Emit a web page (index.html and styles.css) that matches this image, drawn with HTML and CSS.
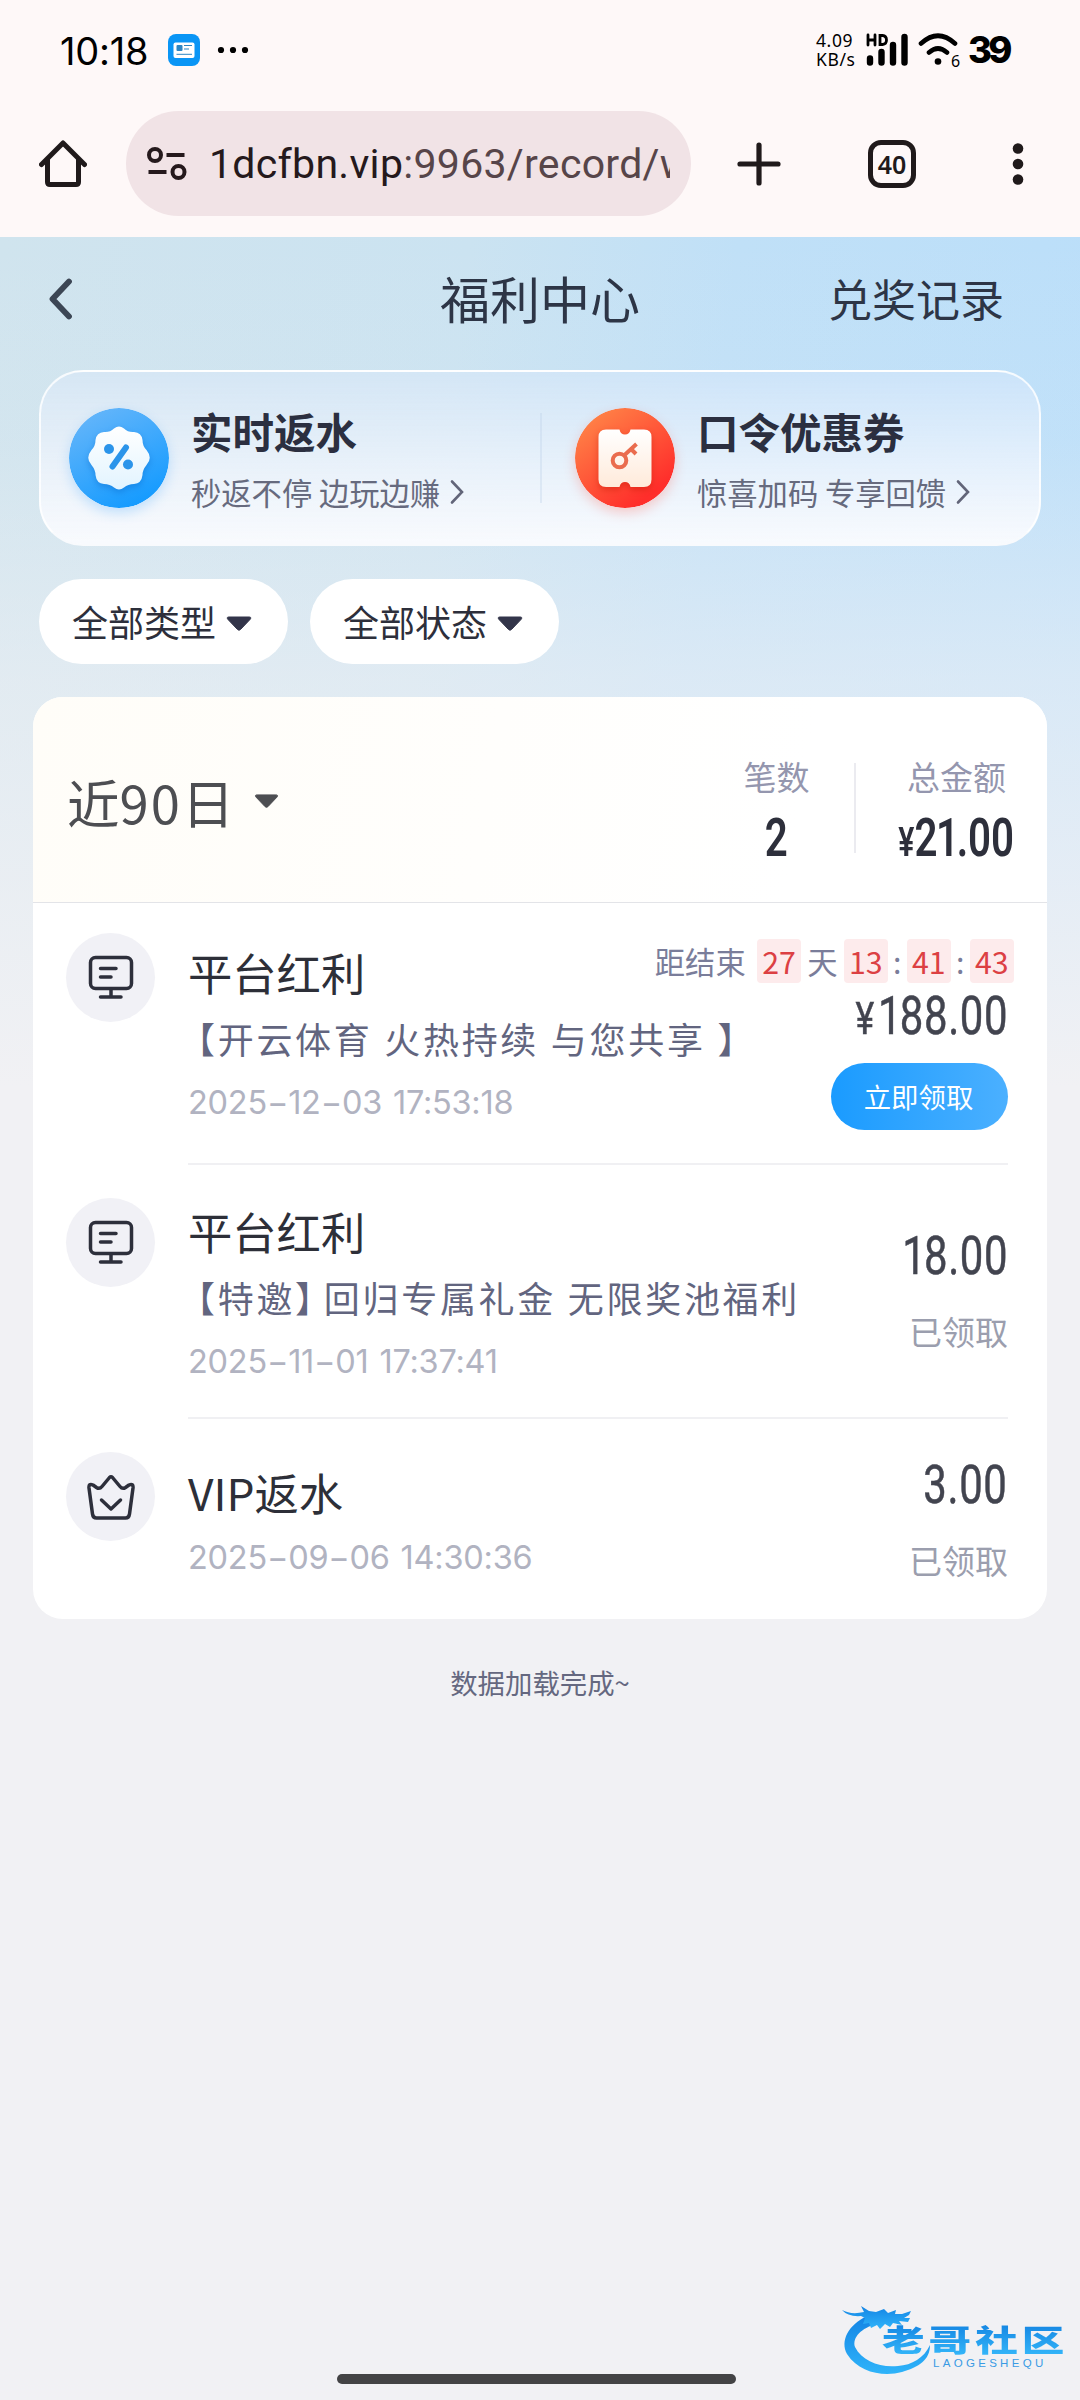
FILE: index.html
```html
<!DOCTYPE html>
<html lang="zh-CN">
<head>
<meta charset="utf-8">
<title>福利中心</title>
<link rel="stylesheet" href="styles.css">
</head>
<body>
<header class="statusbar">
  <span class="clock">10:18</span>
  <svg class="app-badge" width="32" height="32" viewBox="0 0 32 32"><rect width="32" height="32" rx="8" fill="#0a95f5"/><rect x="5.500" y="8.500" width="21" height="15.500" rx="2" fill="#fff"/><rect x="8.500" y="11" width="6" height="6" rx="1" fill="#2d86c4"/><path d="M16 11.500h8M16 15h5M8.500 20.300h15.500" stroke="#2d86c4" stroke-width="1"/></svg>
  <svg class="more" width="32" height="8" viewBox="0 0 32 8"><circle cx="4" cy="4" r="3.100"/><circle cx="16" cy="4" r="3.100"/><circle cx="28" cy="4" r="3.100"/></svg>
  <span class="speed"><span>4.09</span><span>KB/s</span></span>
  <svg class="signal" width="44" height="34" viewBox="0 0 44 34"><path d="M2 2v10M9 2v10M2 7h7M14 2.500v9h2.500q4-.4 4-4.500t-4-4.500z" fill="none" stroke="#000" stroke-width="2.800" stroke-linecap="round"/><path d="M4 25.500v4M15.500 19v10.500M27 12v17.500M38.500 4v25.500" stroke="#000" stroke-width="6.400" stroke-linecap="round"/></svg>
  <svg class="wifi" width="42" height="34" viewBox="0 0 42 34"><path d="M3 10.500Q20 -5 37 10.500M11 19.500Q20 11.500 29 19.500" fill="none" stroke="#000" stroke-width="4.600" stroke-linecap="round"/><circle cx="20" cy="28.500" r="3.300"/></svg>
  <span class="wifi-gen">6</span>
  <span class="battery">39</span>
</header>

<nav class="browser">
  <svg class="home" width="48" height="48" viewBox="0 0 48 48"><path d="M2.500 24.500L24 3L45.500 24.500M8.500 19v23q0 2.500 2.500 2.500h26q2.500 0 2.500-2.500V19" fill="none" stroke="#201a1b" stroke-width="5" stroke-linecap="round" stroke-linejoin="round"/></svg>
  <div class="urlbar">
    <svg width="40" height="36" viewBox="0 0 40 36"><g fill="none" stroke="#25191c" stroke-width="4"><circle cx="8" cy="9" r="6"/><circle cx="31.500" cy="26" r="6"/><path d="M19.500 9h18M1.500 26h18"/></g></svg>
    <div class="url"><b>1dcfbn.vip</b>:9963/record/w</div>
  </div>
  <svg class="plus" width="44" height="44" viewBox="0 0 44 44"><path d="M22 3v38M3 22h38" stroke="#201a1b" stroke-width="5.200" stroke-linecap="round"/></svg>
  <div class="tabs">40</div>
  <svg class="kebab" width="12" height="44" viewBox="0 0 12 44"><g fill="#201a1b"><circle cx="6" cy="6.500" r="5.300"/><circle cx="6" cy="22" r="5.300"/><circle cx="6" cy="37.500" r="5.300"/></g></svg>
</nav>

<main class="page">
  <div class="titlebar">
    <svg width="26" height="42" viewBox="0 0 26 42"><path d="M22 3.500L5.500 21l16.500 17.500" fill="none" stroke="#3c4654" stroke-width="5.800" stroke-linecap="round" stroke-linejoin="round"/></svg>
    <h1>福利中心</h1>
    <a>兑奖记录</a>
  </div>

  <section class="promo">
    <div class="promo-item">
      <svg class="promo-icon blue" width="100" height="100" viewBox="0 0 100 100">
        <defs><linearGradient id="gb" x1="0.200" y1="0" x2="0.700" y2="1"><stop offset="0" stop-color="#66b6fa"/><stop offset="1" stop-color="#129aff"/></linearGradient><linearGradient id="gw" x1="0" y1="0" x2="0" y2="1"><stop offset="0" stop-color="#fff"/><stop offset="1" stop-color="#e2f4ff"/></linearGradient></defs>
        <circle cx="50" cy="50" r="50" fill="url(#gb)"/>
        <path class="badge" d="M45 20.500Q50 16.500 55 20.500Q59 24.500 65 24Q72.500 24.500 73.500 32Q73.500 38 77.500 42Q84 50 77.500 57Q73.500 62 73.500 67Q72.500 75.500 65 76Q59 76 55 79.500Q50 83.500 45 79.500Q41 76 35 76Q27.500 75.500 26.500 67Q26.500 62 22.500 57Q16 50 22.500 42Q26.500 38 26.500 32Q27.500 24.500 35 24Q41 24.500 45 20.500Z" fill="url(#gw)"/>
        <g fill="#2b94ea"><circle cx="40" cy="41" r="5"/><circle cx="59" cy="56.500" r="5"/><path d="M57 39.500L43.500 58.500" stroke="#2b94ea" stroke-width="6" stroke-linecap="round"/></g>
      </svg>
      <div class="promo-text"><h2>实时返水</h2><p>秒返不停 边玩边赚<svg width="16" height="26" viewBox="0 0 16 26"><path d="M3 2.500L13 13L3 23.500" fill="none" stroke="#626579" stroke-width="2.600" stroke-linecap="round"/></svg></p></div>
    </div>
    <div class="promo-item second">
      <svg class="promo-icon red" width="100" height="100" viewBox="0 0 100 100">
        <defs><linearGradient id="gr" x1="0.100" y1="0.100" x2="0.700" y2="0.900"><stop offset="0" stop-color="#ff8347"/><stop offset="1" stop-color="#ff2e2b"/></linearGradient><linearGradient id="gc" x1="0" y1="0" x2="0" y2="1"><stop offset="0" stop-color="#fff"/><stop offset="1" stop-color="#ffeada"/></linearGradient></defs>
        <circle cx="50" cy="50" r="50" fill="url(#gr)"/>
        <path class="ticket" d="M31 21.500h13.500q1 5 5.500 5t5.500-5H69q7.500 0 7.500 7.500v42.500q0 7.500-7.500 7.500H55.500q-1-5-5.500-5t-5.500 5H31q-7.500 0-7.500-7.500V29q0-7.500 7.500-7.500z" fill="url(#gc)"/>
        <g fill="none" stroke="#ea6c4e" stroke-width="4"><circle cx="44.500" cy="52.500" r="6.800"/><path d="M49 47.500L61.500 36M56 41l5 5"/></g>
      </svg>
      <div class="promo-text"><h2>口令优惠券</h2><p>惊喜加码 专享回馈<svg width="16" height="26" viewBox="0 0 16 26"><path d="M3 2.500L13 13L3 23.500" fill="none" stroke="#626579" stroke-width="2.600" stroke-linecap="round"/></svg></p></div>
    </div>
  </section>

  <div class="filters">
    <button>全部类型<svg width="28" height="17" viewBox="0 0 28 17"><path d="M4 2h20q3 0 1 2.500L15.500 14.500q-1.500 1.500-3 0L3 4.500Q1 2 4 2z" fill="#33354a" stroke="#33354a"/></svg></button>
    <button>全部状态<svg width="28" height="17" viewBox="0 0 28 17"><path d="M4 2h20q3 0 1 2.500L15.500 14.500q-1.500 1.500-3 0L3 4.500Q1 2 4 2z" fill="#33354a" stroke="#33354a"/></svg></button>
  </div>

  <section class="card">
    <div class="summary">
      <div class="range"><span>近<span class="days">90</span>日</span><svg width="27" height="16" viewBox="0 0 28 17"><path d="M4 2h20q3 0 1 2.500L15.500 14.500q-1.500 1.500-3 0L3 4.500Q1 2 4 2z" fill="#4d4e52" stroke="#4d4e52"/></svg></div>
      <div class="stat count"><label>笔数</label><strong class="num">2</strong></div>
      <div class="stat total"><label>总金额</label><strong class="num"><i>¥</i>2<span class="one">1</span>.00</strong></div>
    </div>

    <article class="row first">
      <div class="kind"><svg width="46" height="46" viewBox="0 0 46 46"><g fill="none" stroke="#2d2f3b" stroke-width="3.500" stroke-linecap="round"><rect x="2.500" y="2.500" width="41" height="31" rx="5"/><path d="M12.500 13.500h15.500M12.500 22h10.500M23 34v7.500M12.500 42h20.500"/></g></svg></div>
      <div class="info"><h3>平台红利</h3><p><span class="lead">【</span>开云体育 火热持续 与您共享 】</p><time>2025−12−03 17:53:18</time></div>
      <div class="side">
        <div class="countdown">距结束<b>27</b>天<b>13</b><em>:</em><b>41</b><em>:</em><b>43</b></div>
        <div class="amount"><span class="num"><i>¥</i><span class="one">1</span>88.00</span></div>
        <button class="claim">立即领取</button>
      </div>
    </article>

    <article class="row second-row">
      <div class="kind"><svg width="46" height="46" viewBox="0 0 46 46"><g fill="none" stroke="#2d2f3b" stroke-width="3.500" stroke-linecap="round"><rect x="2.500" y="2.500" width="41" height="31" rx="5"/><path d="M12.500 13.500h15.500M12.500 22h10.500M23 34v7.500M12.500 42h20.500"/></g></svg></div>
      <div class="info"><h3>平台红利</h3><p><span class="lead">【</span>特邀<span class="tail">】</span>回归专属礼金 无限奖池福利</p><time>2025−11−01 17:37:41</time></div>
      <div class="side"><div class="amount"><span class="num"><span class="one">1</span>8.00</span></div><span class="state">已领取</span></div>
    </article>

    <article class="row third-row">
      <div class="kind"><svg width="48" height="46" viewBox="0 0 48 46"><g fill="none" stroke="#2d2f3b" stroke-width="3.500" stroke-linecap="round" stroke-linejoin="round"><path d="M22.500 3.500q1.500-1.500 3 0L33 12.500q2.500 3 5.500 1l3.500-2.500q4.500-2 4 3L42.500 40q-.5 4-4 4h-29q-3.500 0-4-4L2 14q-.5-5 4-3l3.500 2.500q3 2 5.500-1z"/><path d="M14.500 26l9.500 9l9.500-9"/></g></svg></div>
      <div class="info"><h3>VIP返水</h3><time>2025−09−06 14:30:36</time></div>
      <div class="side"><div class="amount"><span class="num">3.00</span></div><span class="state">已领取</span></div>
    </article>
  </section>
  <p class="done">数据加载完成~</p>
</main>

<div class="watermark">
  <svg width="96" height="74" viewBox="0 0 96 74"><defs><linearGradient id="dg" x1="0" y1="0" x2="0" y2="1"><stop offset="0" stop-color="#1484e4"/><stop offset="1" stop-color="#2fb4fa"/></linearGradient></defs><g fill="url(#dg)"><path d="M27 13C8 22 0 38 7 51C19 70 44 74 62 69C79 64 90 57 90 42C84 55 72 62 58 63C40 65 22 58 15 44C12 34 22 25 36 21Z"/><path d="M2 7q9 5 22 2l-3-6 8 5 7 1 8-3 4 4 8-3-1 4 7 0 9-3-2 4-5 3 6 0-2 4-9-1 3 4-9-2-3 4-5-3-5 5-3-4-6 3-2-5-6 1 2-6-4-2Q8 14 2 7z"/></g></svg>
  <div class="wm-text"><span class="wm-name">老哥社区</span><span class="wm-latin">LAOGESHEQU</span></div>
</div>
<div class="gesture"></div>
</body>
</html>
```
FILE: styles.css
```css
* { box-sizing: border-box; margin: 0; padding: 0; }
body {
  width: 1080px; height: 2400px; overflow: hidden; position: relative;
  display: flex; flex-direction: column;
  background: #f1f1f4; color: #2d2f3b;
  font-family: "Noto Sans CJK SC", sans-serif;
}
h1, h2, h3 { font-weight: 400; }
svg { display: block; flex: none; }
button { border: 0; font: inherit; color: inherit; }
i, em { font-style: normal; }

.statusbar {
  height: 100px; background: #fef8f8; color: #000;
  display: flex; align-items: center; padding-left: 60px; flex: none;
}
.clock { font: 400 38px/40px Inter, sans-serif; letter-spacing: -.2px; width: 108px; margin-top: 2px; }
.more { margin-left: 17px; }
.speed { display: flex; flex-direction: column; font: 400 17.500px/19px "Noto Sans", sans-serif; margin-left: 567px; width: 50px; letter-spacing: .6px; }
.signal { width: 44px; }
.wifi { margin-left: 8px; }
.wifi-gen { font: 400 16px/16px "Noto Sans", sans-serif; margin: 21px 0 0 -9px; width: 17px; }
.battery { font: 800 36.500px/40px Inter, sans-serif; letter-spacing: -3.800px; }

.browser { height: 137px; background: #fef8f8; display: flex; align-items: center; flex: none; padding: 0 0 10px 39px; }
.urlbar { width: 565px; height: 105px; margin-left: 39px; border-radius: 53px; background: #f1e3e6; display: flex; align-items: center; padding-left: 21px; }
.url { margin-left: 22px; width: 461px; overflow: hidden; white-space: nowrap; font: 400 41px/60px Roboto, sans-serif; color: #574549; letter-spacing: .3px; }
.url b { font-weight: 400; color: #25191c; }
.plus { margin-left: 46px; }
.tabs { width: 48px; height: 48px; margin-left: 87px; border: 5px solid #201a1b; border-radius: 13px; font: 600 25px/38px "Noto Sans", sans-serif; color: #201a1b; text-align: center; }
.kebab { margin-left: 96px; }

.page {
  height: 2163px; display: flex; flex-direction: column;
  background:
    linear-gradient(180deg, rgba(241,241,244,0) 0, rgba(241,241,244,.1) 200px, rgba(241,241,244,.55) 440px, #f1f1f4 850px),
    linear-gradient(97deg, #d0e4ee 0, #cbe3f1 35%, #c0e0f7 55%, #b8defb 100%);
}
.titlebar { height: 124px; display: flex; align-items: center; padding-left: 47px; }
.titlebar h1 { font-size: 50px; line-height: 60px; margin: -5px 0 0 367px; color: #2d3546; }
.titlebar a { font-size: 44px; line-height: 60px; margin: -3px 0 0 188px; color: #2d3546; }

.promo {
  width: 1002px; height: 176px; margin: 9px 0 0 39px; border: 2px solid rgba(255,255,255,.8); border-bottom-color: #f8fafd;
  border-radius: 44px; display: flex; align-items: center; padding: 0 0 1px 28px;
  background: linear-gradient(180deg, rgba(221,233,252,.4), rgba(250,251,254,.95));
}
.promo-item { display: flex; align-items: center; width: 471px; }
.promo-item.second { border-left: 2px solid rgba(190,208,232,.35); padding-left: 33px; height: 90px; }
.promo-icon { border-radius: 50%; }
.blue { box-shadow: 0 5px 12px rgba(50,160,255,.25); }
.red { box-shadow: 0 5px 12px rgba(255,80,60,.25); }
.badge { filter: drop-shadow(0 3px 3px rgba(0,90,190,.35)); }
.ticket { filter: drop-shadow(0 3px 3px rgba(190,20,0,.4)); }
.promo-text { margin: 8px 0 0 22px; }
.promo-text h2 { font-size: 41.500px; line-height: 60px; font-weight: 700; color: #2b2f40; }
.promo-text p { display: flex; align-items: center; font-size: 30.300px; line-height: 60px; margin-top: 1px; color: #666a7e; white-space: pre; }
.promo-text p svg { margin-left: 9px; }

.filters { display: flex; gap: 22px; margin: 33px 0 0 39px; }
.filters button { width: 249px; height: 85px; border-radius: 43px; background: #fff; display: flex; align-items: center; justify-content: center; gap: 9px; font-size: 36px; line-height: 50px; padding: 0 2px 2px 0; color: #2d2f3b; }
.filters svg { margin-top: 5px; }

.card { width: 1014px; height: 922px; margin: 33px 0 0 33px; background: #fff; border-radius: 30px; overflow: hidden; flex: none; }
.summary { height: 206px; background: linear-gradient(100deg, #fffdf8, #fffefc 45%, #fff 75%); border-bottom: 1px solid #e3e4e8; display: flex; align-items: center; padding-left: 34px; }
.range { display: flex; align-items: center; font-size: 52.500px; line-height: 70px; color: #4d4e52; width: 640px; gap: 19px; padding-top: 2px; }
.days { letter-spacing: 2px; }
.num { display: inline-block; font-family: Roboto, sans-serif; }
.stat { display: flex; flex-direction: column; align-items: center; height: 90px; }
.stat label { font-size: 33px; line-height: 26px; color: #9496ae; }
.stat .num { font-size: 53px; font-weight: 600; line-height: 50px; margin-top: 24px; transform: scaleX(.76); white-space: nowrap; }
.num i { font-size: .75em; }
.one { margin: 0 -3px 0 -2px; }
.count { width: 149px; padding-right: 8px; margin-top: 17px; border-right: 2px solid #ebebf0; }
.total { width: 151px; margin: 17px 0 0 25px; }

.row { display: flex; margin-left: 33px; width: 942px; position: relative; }
.kind { width: 89px; height: 89px; border-radius: 50%; background: #f1f1f6; display: flex; align-items: center; justify-content: center; flex: none; }
.info { margin-left: 33px; flex: 1; white-space: nowrap; height: 100%; border-bottom: 2px solid #f0f0f3; }
.info h3 { font-size: 44.300px; line-height: 60px; color: #2d2f38; }
.info p { font-size: 36px; line-height: 60px; letter-spacing: 2.700px; word-spacing: 1px; color: #62657f; margin-top: 6px; }
.info time { display: block; font: 400 32.500px/40px Inter, sans-serif; color: #b1b3c1; letter-spacing: -.25px; word-spacing: 2px; }
.lead { font-feature-settings: "halt"; margin-left: 9px; }
.tail { font-feature-settings: "halt"; margin-right: 8px; }
.side { display: flex; flex-direction: column; align-items: flex-end; position: absolute; right: 0; top: 0; }
.first { height: 262px; padding-top: 30px; }
.first .info { padding-top: 9px; height: 232px; }
.first .side { top: 36px; }
.first time { margin-top: 15px; }
.second-row { height: 254px; padding-top: 33px; }
.second-row .info { padding-top: 3px; height: 221px; }
.second-row time { margin-top: 15px; }
.third-row { height: 200px; padding-top: 33px; }
.third-row .info { padding-top: 10px; border: 0; height: 160px; }
.third-row time { margin-top: 16px; }
.countdown { display: flex; align-items: center; font-size: 30.300px; line-height: 44px; color: #7a7d9a; margin-right: -6px; }
.countdown b { width: 44.500px; height: 44px; border-radius: 4px; background: #fdebec; color: #dc4043; font-weight: 400; text-align: center; line-height: 44px; }
.countdown b:nth-of-type(1) { margin: 0 6px 0 11px; }
.countdown b:nth-of-type(2) { margin-left: 6px; }
.countdown em { width: 18.500px; text-align: center; }
.amount { height: 50px; }
.amount .num { font-size: 53px; line-height: 50px; transform: scaleX(.79); transform-origin: right; color: #42444f; letter-spacing: .8px; -webkit-text-stroke: .5px #42444f; }
.amount i { margin-right: 6px; font-size: .85em; }
.first .amount { margin-top: 8px; }
.claim { width: 177px; height: 67px; border-radius: 34px; background: linear-gradient(90deg, #1a9bff, #4bb0ff); color: #fff; font-size: 27.400px; line-height: 40px; padding: 0 2px 1px 0; margin-top: 22px; }
.second-row .amount { margin-top: 66px; }
.third-row .amount { margin-top: 41px; }
.state { font-size: 33px; line-height: 50px; color: #9b9eae; margin-top: 25px; }

.done { text-align: center; font-size: 27.400px; line-height: 40px; color: #656880; margin-top: 43px; }

.gesture { position: absolute; left: 337px; top: 2374px; width: 399px; height: 10px; border-radius: 5px; background: #434345; }
.watermark { position: absolute; left: 840px; top: 2303px; display: flex; }
.wm-text { display: flex; flex-direction: column; margin: 17px 0 0 -54px; }
.wm-name { font-size: 30px; font-weight: 900; line-height: 37px; letter-spacing: 2.800px; transform: scaleX(1.42); transform-origin: left; background: linear-gradient(#1180e0, #35b8fa); -webkit-background-clip: text; background-clip: text; color: transparent; }
.wm-latin { font: 400 11.500px/11px "Liberation Sans", sans-serif; letter-spacing: 3.300px; color: #3a9be4; margin: 1px 0 0 51px; }
```
